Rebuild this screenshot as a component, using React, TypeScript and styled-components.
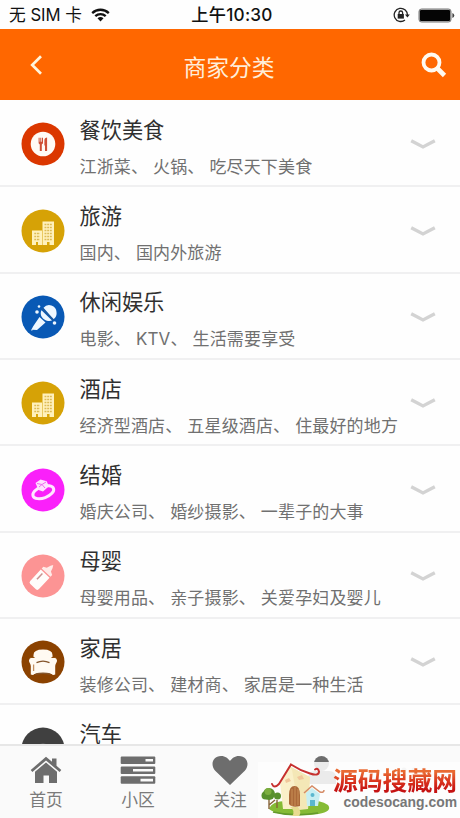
import React from 'react';
import styled, { createGlobalStyle } from 'styled-components';

const Global = createGlobalStyle`
  * { box-sizing: border-box; }
  html, body { margin: 0; padding: 0; overflow: hidden; }
  body { background: #fefefe; font-family: Inter, "Noto Sans CJK SC", sans-serif; }
  svg { display: block; flex: none; }
`;

const Screen = styled.div`
  position: relative;
  width: 460px;
  height: 818px;
  overflow: hidden;
  display: flex;
  flex-direction: column;
  background: #fefefe;
`;

const StatusBar = styled.div`
  height: 29px;
  flex: none;
  display: grid;
  grid-template-columns: 1fr auto 1fr;
  align-items: center;
  padding: 1px 5px 0 9px;
  color: #111;
  font-size: 16.7px;
  line-height: 28px;
  white-space: nowrap;
`;

const Carrier = styled.div`
  display: flex;
  align-items: center;
  gap: 9px;
`;

const Clock = styled.div`
  font-weight: 500;
  font-size: 17.2px;
  letter-spacing: 0.25px;
`;

const StatusRight = styled.div`
  display: flex;
  align-items: center;
  justify-content: flex-end;
  gap: 8px;
`;

const Header = styled.header`
  height: 71px;
  flex: none;
  display: grid;
  grid-template-columns: 60px 1fr 60px;
  align-items: center;
  background: #ff6700;
  color: #ffeeda;
  padding: 6px 6px 0 6px;
`;

const HeaderTitle = styled.h1`
  margin: 0;
  text-align: center;
  font-size: 22.8px;
  font-weight: 400;
  line-height: 34px;
  padding-right: 2px;
`;

const HeaderSide = styled.div<{ $end?: boolean }>`
  display: flex;
  justify-content: ${p => (p.$end ? 'flex-end' : 'flex-start')};
  padding: ${p => (p.$end ? '0 7px 5px 0' : '0 0 6px 23px')};
`;

const List = styled.main`
  flex: 1;
  min-height: 0;
  overflow: hidden;
  padding-top: 1px;
`;

const Row = styled.div`
  height: 86.35px;
  display: flex;
  align-items: center;
  padding: 2px 24px 0 21px;
  border-bottom: 2px solid #f0f0f1;
`;

const RowText = styled.div`
  flex: 1;
  padding: 9px 0 0 14.500px;
  white-space: nowrap;
`;

const RowTitle = styled.div`
  color: #303030;
  font-size: 21.2px;
  line-height: 34px;
  height: 36px;
`;

const RowSub = styled.div`
  color: #707070;
  font-size: 17px;
  letter-spacing: 0.15px;
  line-height: 36px;
  height: 36px;
`;

const RowArrow = styled.div`
  padding-top: 2px;
`;

const TabBar = styled.nav`
  height: 74px;
  flex: none;
  display: flex;
  background: #fafafa;
  border-top: 2px solid #e7e7e7;
`;

const Tab = styled.div`
  width: 92px;
  display: flex;
  flex-direction: column;
  align-items: center;
  color: #6d6d6d;
  padding-top: 8px;
`;

const TabIcon = styled.div`
  height: 32px;
  display: flex;
  align-items: center;
`;

const TabLabel = styled.div`
  font-size: 16.8px;
  line-height: 29px;
  color: #7b7b7b;
`;

const Watermark = styled.div`
  position: absolute;
  right: 0;
  bottom: 0;
  width: 202px;
  height: 56px;
  display: flex;
  justify-content: space-between;
  padding-right: 3px;
  background: rgba(253, 253, 253, 0.88);
`;

const WatermarkText = styled.div`
  display: flex;
  flex-direction: column;
  align-items: flex-end;
  padding-top: 6px;
  white-space: nowrap;
`;

const WatermarkName = styled.div`
  font-size: 24.8px;
  line-height: 26px;
  height: 26px;
  font-weight: 700;
  background: linear-gradient(#e96a32 15%, #d8301d 55%, #c51212 85%);
  background-clip: text;
  -webkit-background-clip: text;
  color: transparent;
`;

const WatermarkUrl = styled.div`
  font-family: "Liberation Sans", Arial, sans-serif;
  font-weight: 700;
  font-size: 13.9px;
  line-height: 16px;
  height: 16px;
  color: #777;
`;

const Wifi = () => (
  <svg width="19" height="14" viewBox="0 0 19 14" fill="none" stroke="#111" strokeWidth="2.3">
    <path d="M1.2 5.1a12 12 0 0 1 16.6 0" />
    <path d="M4.3 8.2a7.6 7.6 0 0 1 10.4 0" />
    <path d="M9.5 13.4 6.5 10.3a4.4 4.4 0 0 1 6 0z" fill="#111" stroke="none" />
  </svg>
);

const RotationLock = () => (
  <svg width="17" height="16" viewBox="0 0 17 16" fill="none" stroke="#222" strokeWidth="1.3">
    <path d="M14.4 8.4A6.6 6.6 0 1 0 12 13" />
    <path d="M12 7.6h4.8l-2.4 3z" fill="#222" stroke="none" />
    <rect x="4.7" y="7" width="6.2" height="4.6" fill="#222" stroke="none" />
    <path d="M6 7.3V5.8a1.8 1.8 0 0 1 3.6 0v1.5" />
  </svg>
);

const Battery = () => (
  <svg width="37" height="15" viewBox="0 0 37 15">
    <rect x="1" y="1" width="32" height="13" rx="2.5" fill="#bbb" stroke="#777" strokeWidth="1" />
    <rect x="1.9" y="1.9" width="30.2" height="11.2" rx="1.3" fill="#050505" />
    <path d="M34.4 5v5a2.6 2.6 0 0 0 0-5z" fill="#444" />
  </svg>
);

const Back = () => (
  <svg width="14" height="22" viewBox="0 0 14 22" fill="none" stroke="#fff5dc" strokeWidth="2.7">
    <path d="M12 2.2 3.2 11 12 19.8" />
  </svg>
);

const Search = () => (
  <svg width="26" height="26" viewBox="0 0 26 26" fill="none" stroke="#fffaf0">
    <circle cx="10.5" cy="10.5" r="8" strokeWidth="3.8" />
    <path d="M16.5 16.5 23.5 23.5" strokeWidth="4.6" />
  </svg>
);

const Chevron = () => (
  <svg width="26" height="12" viewBox="0 0 26 12" fill="none" stroke="#d3d3d3" strokeWidth="3.4">
    <path d="M1.2 1.8 13 7.9 24.8 1.8" />
  </svg>
);

type IconKind = 'food' | 'building' | 'mic' | 'ring' | 'bottle' | 'sofa' | 'car';

const glyphs: Record<IconKind, React.ReactNode> = {
  food: (
    <>
      <circle cx="22" cy="22" r="12.3" fill="#fffaf5" />
      <g fill="#cf4f35">
        <path d="M17.6 15.8h1v4h.7v-4h1v4h.7v-4h1v4.8c0 1-.5 1.6-1.2 1.9V29h-2v-6.5c-.7-.3-1.2-.9-1.2-1.9z" />
        <path d="M23.4 18.2c0-1.5 1.2-2.500 2.700-2.600V29H24v-5.500h-.6z" />
      </g>
    </>
  ),
  building: (
    <>
      <path d="M11 21.500h10V36H11zM21.500 12.500H33V36H21.500z" fill="#fff1bc" />
      <path d="M13.300 24.500H19M13.300 27.500H19M13.300 30.500H19M23.500 15.500h7.400M23.500 18.500h7.400M23.500 21.500h7.400M23.500 24.500h7.400M23.500 27.500h7.400M23.500 30.500h7.400" stroke="#dcbb55" strokeWidth="1.300" strokeDasharray="1.900 .8" />
      <path d="M15 36v-3h2v3zM26 36v-3h2.500v3z" fill="#d9a70d" />
    </>
  ),
  mic: (
    <>
      <g fill="#eef7ff">
        <path d="M22.500 12.800A7.300 7.300 0 0 1 35.500 17c.5 2.500-.5 5.500-3 7.200z" />
        <path d="M20.500 15.200 31 25.600c-4 1.500-9.500-1-10.900-5.200-.6-1.800-.4-3.600.4-5.200z" />
        <path d="m18.500 22 6 5.600L16 35l-4.500-.2L11 36l-.8-.9 2-3.800z" />
        <circle cx="18" cy="11.500" r="1.300" />
        <circle cx="16" cy="17" r="1.800" />
        <circle cx="33.500" cy="28" r="1.800" />
      </g>
      <path d="m21 13.500 11.900 11.700" stroke="#20599a" strokeWidth="1.200" />
    </>
  ),
  ring: (
    <>
      <ellipse cx="22.300" cy="24.200" rx="10.900" ry="5.700" transform="rotate(-20 22.300 24.200)" fill="none" stroke="#ffe7ff" strokeWidth="3" />
      <path d="m14.500 15 5-3.600 6.200 1.800 2.200 5-5.900 5.300-4.500-1.500z" fill="#ffdfff" />
      <path d="m16 15.500 5 1 4-2.500M18 19l3-2.500 3 3.500" stroke="#eb6ced" strokeWidth="1" fill="none" />
    </>
  ),
  bottle: (
    <g transform="rotate(43 22 22)">
      <path d="M16 18.800h12v15.500q0 2.200-2.200 2.200h-7.600q-2.200 0-2.200-2.200z" fill="#fffdfb" />
      <path d="M16 17.500v-2.500l3.200-1.600q1.300-4.900 2.800-6.400 1.500 1.500 2.800 6.400l3.200 1.600v2.500z" fill="#ffebe8" />
      <path d="M19.800 20.500v8" stroke="#c99290" strokeWidth="1.500" />
    </g>
  ),
  sofa: (
    <>
      <path d="M12.500 18v-3q0-5.500 9.500-5.500t9.500 5.500v3q4-1.300 4.500 2.200c.3 2-1.800 3.400-1.800 5.800v8.600q-2.700 1-3.500-.7H13.300q-.8 1.700-3.500.7V26c0-2.400-2.100-3.800-1.800-5.800Q8.500 16.700 12.500 18z" fill="#fffaf2" />
      <path d="M9 17.500h4.500M30.500 17.500H35" stroke="#93500d" strokeWidth="1" />
      <path d="M15.500 22.700c4-2 9-2 13 0M14.500 34q7.500-1.500 15 0" stroke="#84542a" strokeWidth="1.300" fill="none" />
      <path d="M12.600 24.500v6.500" stroke="#c28f61" strokeWidth="1.300" />
    </>
  ),
  car: <path d="M13 24l3-5q.6-1.500 2.500-1.900 3.500-.8 7 0 1.900.4 2.500 1.900l3 5v8H13z" fill="#aaa" />,
};

const CategoryIcon = ({ kind, color }: { kind: IconKind; color: string }) => (
  <svg width="44" height="44" viewBox="0 0 44 44">
    <circle cx="22" cy="22" r="21.500" fill={color} />
    {glyphs[kind]}
  </svg>
);

const rows: { kind: IconKind; color: string; title: string; sub: string }[] = [
  { kind: 'food', color: '#db3700', title: '餐饮美食', sub: '江浙菜、 火锅、 吃尽天下美食' },
  { kind: 'building', color: '#d6a206', title: '旅游', sub: '国内、 国内外旅游' },
  { kind: 'mic', color: '#0959b5', title: '休闲娱乐', sub: '电影、 KTV、 生活需要享受' },
  { kind: 'building', color: '#d6a206', title: '酒店', sub: '经济型酒店、 五星级酒店、 住最好的地方' },
  { kind: 'ring', color: '#fa20fa', title: '结婚', sub: '婚庆公司、 婚纱摄影、 一辈子的大事' },
  { kind: 'bottle', color: '#fc9494', title: '母婴', sub: '母婴用品、 亲子摄影、 关爱孕妇及婴儿' },
  { kind: 'sofa', color: '#8b4200', title: '家居', sub: '装修公司、 建材商、 家居是一种生活' },
  { kind: 'car', color: '#404040', title: '汽车', sub: '' },
];

const Home = () => (
  <svg width="32" height="28" viewBox="0 0 32 28" fill="#6d6d6d">
    <path d="M16 .8 22 5.800V2.500h4.500V9.700l4.800 4.300-1.700 2L16 4.500 2.400 16 .7 14z" />
    <path d="M16 6.500 27 15.800V27h-8v-7.500h-5.500V27H5V15.800z" />
  </svg>
);

const Server = () => (
  <svg width="36" height="28" viewBox="0 0 36 28">
    <g fill="#6d6d6d">
      <rect x=".7" y=".5" width="34.600" height="7.500" rx="1" />
      <rect x=".7" y="10.400" width="34.600" height="7.500" rx="1" />
      <rect x=".7" y="20.300" width="34.600" height="7.500" rx="1" />
    </g>
    <path d="M25.500 3h7.500v2.600h-7.500zM13 12.900h20v2.600H13zM20.500 22.800H33v2.600H20.500z" fill="#fafafa" />
  </svg>
);

const Heart = () => (
  <svg width="36" height="31" viewBox="0 0 36 31">
    <path d="M18 30 3.200 15.700C-1.800 10.500.2 1 9 1c4.500 0 7 2.500 9 5 2-2.500 4.500-5 9-5 8.800 0 10.800 9.500 5.800 14.700z" fill="#6d6d6d" />
  </svg>
);

const User = () => (
  <svg width="30" height="28" viewBox="0 0 30 28" fill="#6d6d6d">
    <circle cx="14.500" cy="7.500" r="7.500" />
    <path d="M1 28V22q0-7 7-7h14q7 0 7 7v6z" />
  </svg>
);

const More = () => (
  <svg width="30" height="28" viewBox="0 0 30 28" fill="#bbb">
    <circle cx="5" cy="14" r="2.500" />
    <circle cx="15" cy="14" r="2.500" />
    <circle cx="25" cy="14" r="2.500" />
  </svg>
);

const House = () => (
  <svg width="72" height="56" viewBox="0 0 72 56">
    <path d="M11 47Q14 38 32 39q28-3 38 4 6 8-18 10-31 2-41-6z" fill="#85bb35" />
    <path d="M15 50q20 5 45 1" stroke="#63992b" strokeWidth="1.500" fill="none" />
    <path d="M22 20 31 4l21 11-2 32H25z" fill="#faf0c9" />
    <path d="m31 4 21 11-2 32-9 1-7-40z" fill="#f4e7b6" />
    <path d="M14 22q2 5 7 0L33 2.500q9 6 19 9 9 3 9-2-1-4-4-2" fill="none" stroke="#c6302f" strokeWidth="2" strokeLinecap="round" />
    <path d="M31 42V33q0-9 5.500-9t5.500 9v11q-8 2-11-2z" fill="#ab6939" />
    <path d="M34 27v17M37 25v19M40 27v16" stroke="#d29a5e" strokeWidth=".8" />
    <path d="m27 18 4-2 2 3-5 2zM39 15l5-2 2 4-5 1z" fill="#f0c79b" />
    <path d="m48 31 6-5 8 6-2 12H49z" fill="#c8eef2" />
    <path d="m46 31 8-7 8 6q4 1 4-2" fill="none" stroke="#d58c67" strokeWidth="1.500" />
    <path d="M52 38h5v6h-5z" fill="#5ab7cf" />
    <circle cx="54.500" cy="33" r="2" fill="#5ab7cf" />
    <path d="M11 36v11M19 38v8M11 43l6-5" stroke="#876438" strokeWidth="1.400" />
    <g fill="#58902d"><circle cx="11" cy="32" r="6" /><circle cx="7.500" cy="33.500" r="4" /><circle cx="19.500" cy="34" r="3.500" /></g>
    <circle cx="10" cy="29.500" r="3.500" fill="#7cae3f" />
    <path d="M32 45q6 4 2 9h7q3-4-1-9z" fill="#e8dc91" />
  </svg>
);

const tabs = [
  { label: '首页', icon: <Home /> },
  { label: '小区', icon: <Server /> },
  { label: '关注', icon: <Heart /> },
  { label: '', icon: <User /> },
  { label: '', icon: <More /> },
];

export default function App() {
  return (
    <>
      <Global />
      <Screen>
        <StatusBar>
          <Carrier>无 SIM 卡<Wifi /></Carrier>
          <Clock>上午10:30</Clock>
          <StatusRight><RotationLock /><Battery /></StatusRight>
        </StatusBar>
        <Header>
          <HeaderSide><Back /></HeaderSide>
          <HeaderTitle>商家分类</HeaderTitle>
          <HeaderSide $end><Search /></HeaderSide>
        </Header>
        <List>
          {rows.map(r => (
            <Row key={r.title}>
              <CategoryIcon kind={r.kind} color={r.color} />
              <RowText>
                <RowTitle>{r.title}</RowTitle>
                <RowSub>{r.sub}</RowSub>
              </RowText>
              <RowArrow><Chevron /></RowArrow>
            </Row>
          ))}
        </List>
        <TabBar>
          {tabs.map((t, i) => (
            <Tab key={i}>
              <TabIcon>{t.icon}</TabIcon>
              <TabLabel>{t.label}</TabLabel>
            </Tab>
          ))}
        </TabBar>
        <Watermark>
          <House />
          <WatermarkText>
            <WatermarkName>源码搜藏网</WatermarkName>
            <WatermarkUrl>codesocang.com</WatermarkUrl>
          </WatermarkText>
        </Watermark>
      </Screen>
    </>
  );
}
